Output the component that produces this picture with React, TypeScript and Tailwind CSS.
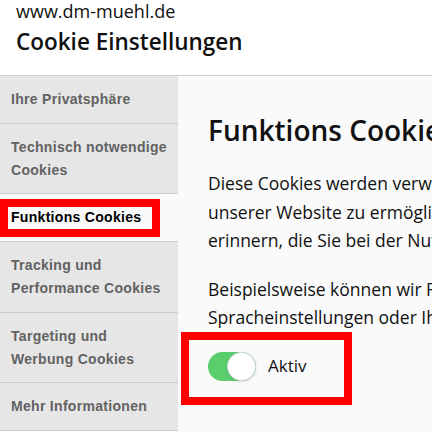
import { useState } from "react"

const sans = "font-['Open_Sans','Noto_Sans',sans-serif]"

const menu = [
  { label: ["Ihre Privatsphäre"], h: "h-[48px]" },
  { label: ["Technisch notwendige", "Cookies"], h: "h-[70px]" },
  { label: ["Funktions Cookies"], h: "h-[48px]", active: true },
  { label: ["Tracking und", "Performance Cookies"], h: "h-[71px]" },
  { label: ["Targeting und", "Werbung Cookies"], h: "h-[70px]" },
  { label: ["Mehr Informationen"], h: "h-[48px]" },
]

export default function App() {
  const [enabled, setEnabled] = useState(true)

  return (
    <div className="relative h-[432px] w-[432px] overflow-hidden bg-[#fafafa]">
      {/* Kopfzeile */}
      <header className={`h-[76px] border-b border-[#cccccc] bg-white pl-4 ${sans}`}>
        <p className="pt-[1px] text-[18px] leading-[20px] text-[#111]">www.dm-muehl.de</p>
        <h1 className="mt-[7px] text-[22.5px] font-semibold leading-[28px] text-[#111]">Cookie Einstellungen</h1>
      </header>

      <div className="flex">
        <nav className="w-[178px] shrink-0 overflow-hidden bg-[#e6e6e6] font-['Liberation_Sans',Arial,sans-serif]">
          {menu.map((item) => (
            <div
              key={item.label.join(" ")}
              className={[
                "flex flex-col justify-center whitespace-nowrap border-b border-[#cccccc] px-[11px] text-[14px] font-bold leading-[23px] tracking-[0.3px]",
                item.h,
                item.active ? "bg-[#fafafa] text-black" : "text-[#626262]",
              ].join(" ")}
            >
              {item.label.map((line) => (
                <div key={line}>{line}</div>
              ))}
            </div>
          ))}
        </nav>

        <main className={`min-w-0 flex-1 overflow-hidden whitespace-nowrap pl-[30px] pt-[36px] text-[#111] ${sans}`}>
          <h2 className="text-[28px] font-semibold leading-[36px]">Funktions Cookies</h2>
          <p className="mt-[21px] text-[17.5px] leading-[28.5px]">
            Diese Cookies werden verwendet, um Ihnen eine persönlichere Erfahrung auf
            <br />
            unserer Website zu ermöglichen und um sich an Ihre Entscheidungen zu
            <br />
            erinnern, die Sie bei der Nutzung unserer Website getroffen haben.
          </p>
          <p className="mt-[20px] text-[17.5px] leading-[28.5px]">
            Beispielsweise können wir Funktions-Cookies verwenden, um Ihre
            <br />
            Spracheinstellungen oder Ihre Anmeldedaten zu speichern.
          </p>
          <div className="mt-[20px] flex items-center gap-3">
            <button
              type="button"
              onClick={() => setEnabled((v) => !v)}
              className={[
                "flex h-[29px] w-[48px] items-center rounded-full p-0",
                enabled ? "justify-end bg-[#5acd6c]" : "justify-start bg-[#d9d9d9]",
              ].join(" ")}
              aria-label="Funktions Cookies umschalten"
            >
              <span className="h-[29px] w-[29px] rounded-full border border-[#dddddd] bg-white shadow-sm" />
            </button>
            <span className="text-[17px] leading-[24px]">Aktiv</span>
          </div>
        </main>
      </div>

      {/* Markierungen */}
      <div className="pointer-events-none absolute left-0 top-[199px] h-[38px] w-[160px] border-[8px] border-[#ff0000]" />
      <div className="pointer-events-none absolute left-[181px] top-[332px] h-[73px] w-[171px] border-[8px] border-[#ff0000]" />
    </div>
  )
}
